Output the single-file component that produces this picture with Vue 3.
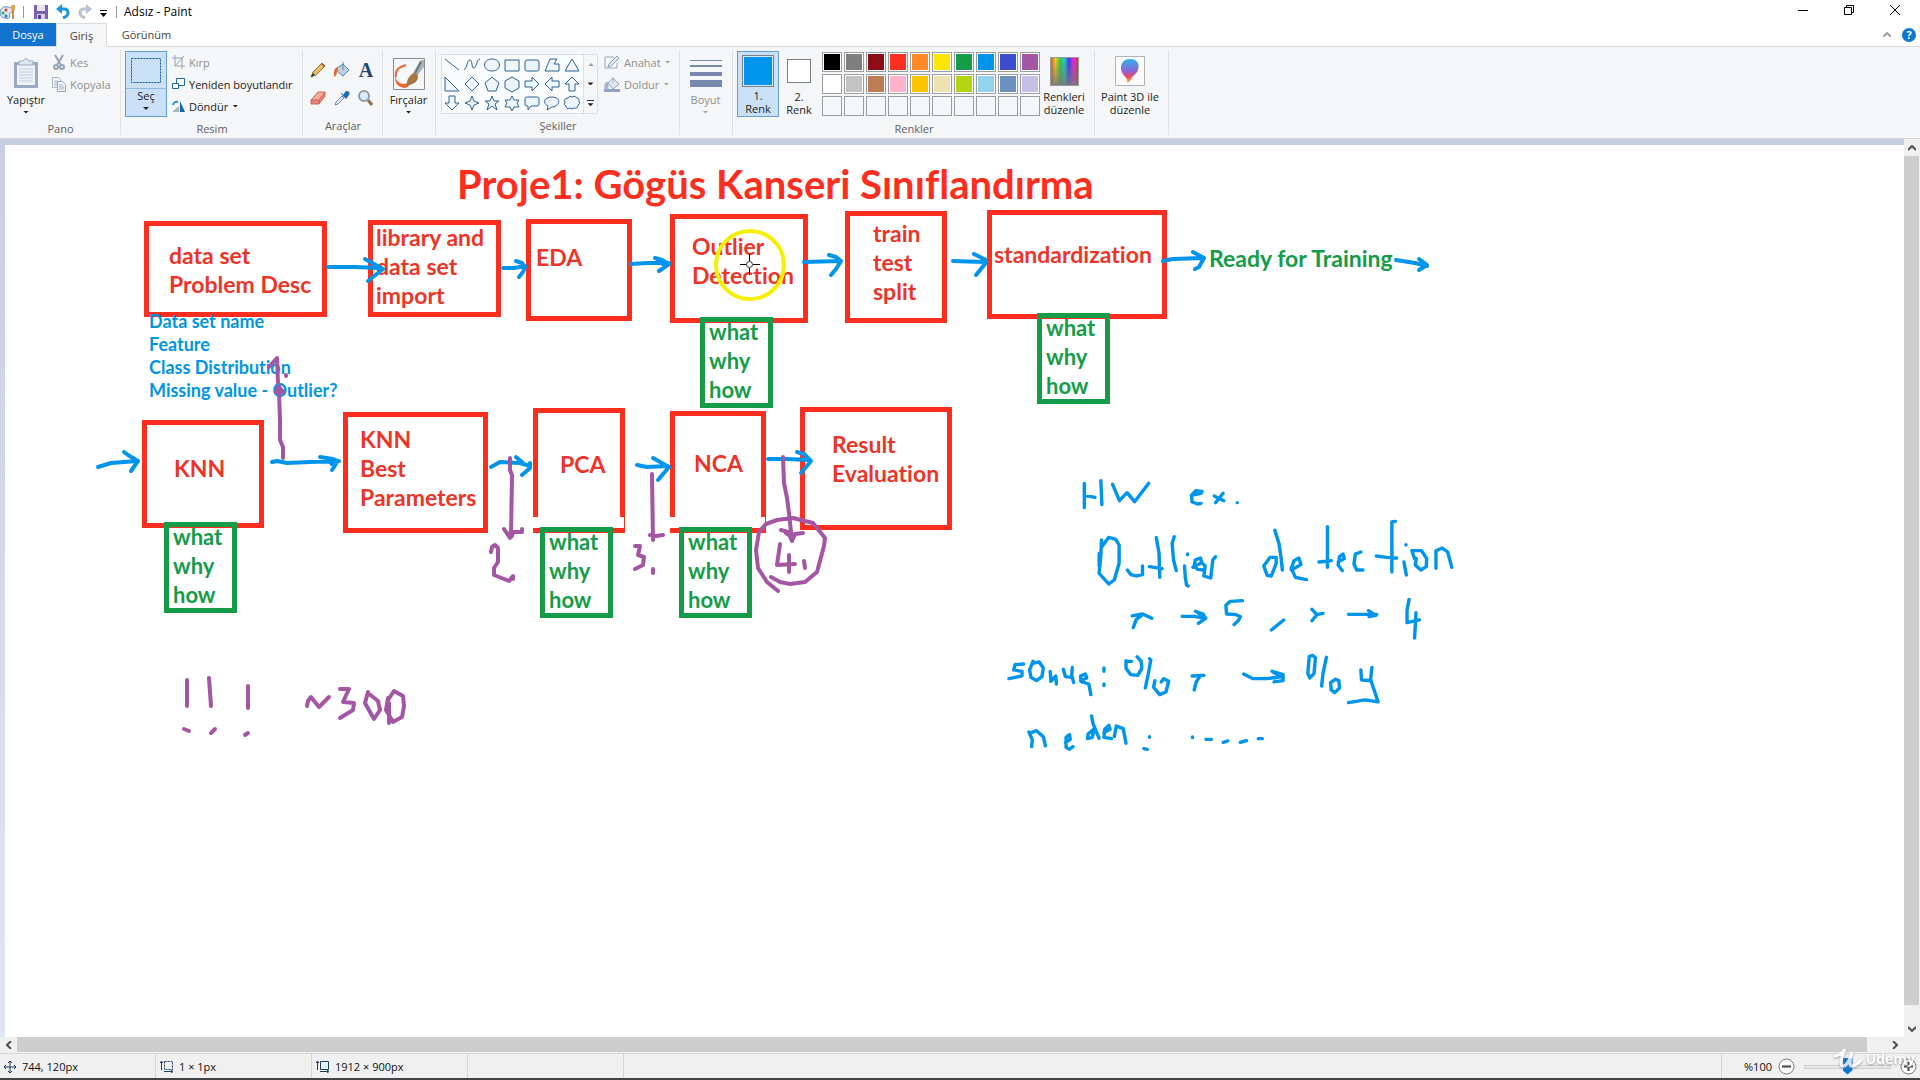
<script setup>
import { ref } from 'vue'

const zoom = ref(50)

const shapes = [
  'M2 3 16 14',
  'M1 14C4 12 4 4 7 4s1 9 4 8 2-8 6-9',
  'M9 3c10 0 10 12 0 12S-1 3 9 3z',
  'M2 4h14v11H2z',
  'M4 4h10q2 0 2 2v7q0 2-2 2H4q-2 0-2-2V6q0-2 2-2z',
  'M7 3h7l-3 5h5v7H2z',
  'M9 3 16 15H2z',
  'M2 2v14h14z',
  'M9 2l7 7-7 7-7-7z',
  'M9 2l7 6-3 8H5L2 8z',
  'M9 2l7 4v7l-7 4-7-4V6z',
  'M2 6h7V2l7 7-7 7v-4H2z',
  'M16 6H9V2L2 9l7 7v-4h7z',
  'M6 16V9H2l7-7 7 7h-4v7z',
  'M6 2v7H2l7 7 7-7h-4V2z',
  'M9 2l2 5 5 2-5 2-2 5-2-5-5-2 5-2z',
  'M9 2l2 5h5l-4 3 2 6-5-4-5 4 2-6-4-3h5z',
  'M9 2l2 4h5l-2 3 2 4h-5l-2 4-2-4H2l2-4-2-3h5z',
  'M4 3h10q2 0 2 2v5q0 2-2 2H8l-3 4v-4H4q-2 0-2-2V5q0-2 2-2z',
  'M9 3c9 0 9 9 0 10l-5 3 1-4C-1 9 1 3 9 3z',
  'M5 4q2-3 4-1 3-2 5 1 3 1 2 3 2 3-1 4 0 4-4 3-2 2-4 0-4 2-4-2-3-1-1-4-2-3 3-4z'
]

const palette = [
  '#000000', '#7f7f7f', '#8c0d15', '#fb2e20', '#ff8a26', '#ffe600', '#149c48', '#0095ec', '#3d4bcc', '#a456a4',
  '#ffffff', '#c3c3c3', '#bd7e56', '#ffb3cb', '#ffc400', '#efe2b0', '#b3d515', '#93d4ec', '#6c90c0', '#c6c0e6',
  '', '', '', '', '', '', '', '', '', ''
]

/* Window position of the sheet's top left corner; all drawing data is in window units. */
const origin = { x: 5, y: 145 }

const boxes = [
  { x: 144, y: 221, w: 183, h: 96 },
  { x: 368, y: 220, w: 133, h: 97 },
  { x: 526, y: 219, w: 106, h: 102 },
  { x: 670, y: 214, w: 138, h: 109 },
  { x: 845, y: 211, w: 102, h: 112 },
  { x: 987, y: 210, w: 180, h: 109 },
  { x: 142, y: 420, w: 122, h: 108 },
  { x: 343, y: 412, w: 145, h: 121 },
  { x: 533, y: 408, w: 92, h: 125, cut: true },
  { x: 670, y: 411, w: 96, h: 122, cut: true },
  { x: 800, y: 407, w: 152, h: 123 }
]

const questions = [
  { x: 700, y: 317 },
  { x: 1037, y: 313 },
  { x: 164, y: 522 },
  { x: 540, y: 527 },
  { x: 679, y: 527 }
]

const notes = [
  { x: 457, y: 158, kind: 'title', lines: ['Proje1: Gögüs Kanseri Sınıflandırma'] },
  { x: 169, y: 241, kind: 'red', lines: ['data set', 'Problem Desc'] },
  { x: 376, y: 223, kind: 'red', lines: ['library and', 'data set', 'import'] },
  { x: 536, y: 243, kind: 'red', lines: ['EDA'] },
  { x: 692, y: 232, kind: 'red', lines: ['Outlier', 'Detection'] },
  { x: 873, y: 219, kind: 'red', lines: ['train', 'test', 'split'] },
  { x: 994, y: 240, kind: 'red', lines: ['standardization'] },
  { x: 1209, y: 244, kind: 'green', lines: ['Ready for Training'] },
  { x: 174, y: 454, kind: 'red', lines: ['KNN'] },
  { x: 360, y: 425, kind: 'red', lines: ['KNN', 'Best', 'Parameters'] },
  { x: 560, y: 450, kind: 'red', lines: ['PCA'] },
  { x: 694, y: 449, kind: 'red', lines: ['NCA'] },
  { x: 832, y: 430, kind: 'red', lines: ['Result', 'Evaluation'] },
  { x: 149, y: 310, kind: 'blue', lines: ['Data set name', 'Feature', 'Class Distribution', 'Missing value - Outlier?'] }
]

const arrows = [
  'M328 267 355 267 380 268M365 259 383 269 368 281',
  'M503 268 514 268 525 266M516 261 522 263 525 267 523 272 519 277',
  'M631 264 648 263 669 263M655 258 662 260 669 264 659 271M658 260 665 266',
  'M804 262 840 261M829 255 836 257 841 261 836 269 831 275',
  'M953 261 984 262M974 254 986 260 985 264 976 275',
  'M1163 261 1173 259 1203 258M1193 252 1204 258 1199 267 1195 269',
  'M1396 260 1415 263 1427 266M1419 259 1427 265 1419 270',
  'M98 467 111 463 137 461M124 452 128 455 138 461 131 471',
  'M272 462 277 461 287 463 310 462 339 461M320 457 333 459 338 461 332 470M326 458 332 464',
  'M491 467 500 462 520 463 530 466M516 457 523 463M530 463 530 468 522 475',
  'M637 465 647 467 668 466M653 458 669 467 658 480',
  'M768 459 787 459 810 460M797 452 804 454 811 461 801 473'
]

const purple = [
  'M283 458 283 447 280 440 280 420 279 392M279 386 276 392 283 392 279 387M269 367 277 358 278 383M286 375 286 376',
  'M510 458 510 470 512 475 511 537M504 529 510 538 514 532 522 532 522 529M507 533 512 536',
  'M491 552 492 547 495 545 498 548 498 562 494 568 494 575 509 581 513 576 513 579',
  'M652 474 653 540M650 535 656 536 663 535',
  'M635 546 640 546 638 555 644 557 643 565 635 569M653 569 653 573',
  'M783 457 784 483 787 498 789 513 792 541M781 530 788 532 792 541 795 534 803 533M786 533 792 537',
  'M778 591 767 582 758 568 756 550 759 532 766 524 777 520 793 518 813 523 825 538 824 546 817 572 805 582 790 584 780 582 771 577',
  'M780 544 777 565 795 564M789 555 789 572M804 561 805 568',
  'M187 680V706M209 678 211 706M248 686V708M184 729 189 731M211 733 215 729M245 735 248 733',
  'M307 706 308 701 311 697 319 707 329 697M340 689 349 689 343 702 354 703 353 710 340 718',
  'M368 692 365 703 374 719 380 710 378 701 368 693M388 700 394 691 403 696 404 706 402 717 393 722 386 710 388 698M389 703V723'
]

const writing = [
  'M361 70V143M361 106 392 112M409 62 412 134M443 73 463 122 485 98 507 125 548 70',
  'M672 106 700 100 703 94 685 92 672 106 674 126 690 132 700 130M738 108 766 122M764 100 742 128M805 128V128',
  'M411 240 409 285 404 340 432 372 448 360 462 310 462 255 452 238 432 232 412 260M404 280V318',
  'M486 330 496 344 512 348 530 344 530 318M570 233 578 280 580 352M550 320 587 326M622 230 616 250 620 300 628 332M661 282V284M652 318 654 350 658 376 663 378',
  'M676 322 702 308 698 294 683 300 680 318 690 328 706 330M742 290 734 300 728 354 708 348 712 318 704 310',
  'M914 211 926 250 932 290 936 330M918 292 900 292 882 318 892 346 904 348 918 310 918 292M962 330 990 314 984 294 970 302 962 325 974 352 1006 359',
  'M1067 200V322M1042 306 1078 302M1098 306 1116 296 1112 282 1102 290 1098 315 1110 332M1164 276 1148 282 1144 312 1152 330 1170 330',
  'M1264 184 1254 186 1254 336M1209 288 1238 292 1268 294M1295 254V255M1289 306 1296 345M1320 296 1312 272 1340 272 1355 296 1354 320 1338 330 1322 315 1325 296M1382 325 1382 272 1400 264 1416 276 1428 322',
  'M500 468 530 462 557 475M530 464 512 478 503 503M645 469 680 469 714 475M684 454 706 462 713 475 692 490M688 456 706 470',
  'M820 422 785 424 772 436 774 462 802 464 814 470 808 482 796 494M904 510 940 480M1022 448 1036 464 1054 460M1036 464 1022 482',
  'M1128 463H1210M1186 452 1208 466 1188 470M1190 455 1200 466M1304 418 1298 450 1298 488 1334 480M1324 458 1320 534',
  'M185 612 160 614 156 630 180 634 180 648 142 656M212 604 202 630 206 652 222 662 238 650 242 624 230 606 212 610M262 634 264 664 278 648 280 672M300 628 306 650 324 652 326 622M326 652 330 668M350 662 368 654 364 642 350 648 352 665 374 672 380 704',
  'M418 624V634M418 672V677M482 602 482 625 496 644 516 646 528 625 526 604 514 590M484 604 498 604M550 596 554 600 546 645 538 684M566 662 562 682 580 704 598 696 606 664 592 656 584 666M674 648 708 646M696 650 686 666 680 690',
  'M824 642 850 656 890 656 936 650M906 634 938 644 938 662 912 666M910 637 930 650 914 654',
  'M1014 590 1010 640 1016 654 1028 640 1032 594 1024 586 1014 590M1064 592 1054 640 1050 678M1090 658 1076 668 1078 690 1088 698 1102 684 1100 662 1090 658M1164 630 1166 660 1192 662 1196 622M1192 658 1214 726 1176 720 1128 728',
  'M200 816 210 840 208 860M202 820 222 812 242 830 248 858M306 848 320 838 318 824 308 832 308 862 318 868 328 860M382 768 386 790 404 835M390 806 372 822 370 836 384 832 390 806M418 818 436 808 432 796 420 808 418 832 440 836M448 830 454 798 474 806 482 850',
  'M550 830V832M534 866 544 868M675 831V833M714 838 730 838M764 847 778 843M814 847 832 842M866 836 878 836'
]

const place = (n) => ({ left: n.x - origin.x + 'px', top: n.y - origin.y + 'px' })
const frame = (n) => ({ ...place(n), width: n.w + 'px', height: n.h + 'px' })
</script>

<template>
  <div class="app">
    <header class="titlebar">
      <svg class="logo" width="16" height="16" viewBox="0 0 16 16">
        <path d="M0 9c0-5 4-7 8-6 5 0 5 5 3 6-2 0-2 1-1 3 0 2-2 3-5 2-3 0-5-2-5-5z" fill="#d9e8f5" stroke="#5f8fb4" />
        <circle cx="3" cy="9" r="1.500" fill="#35a853" /><circle cx="6" cy="6" r="1.500" fill="#e33" /><circle cx="6" cy="12" r="1.500" fill="#27c" />
        <path d="M13 3v12" stroke="#d98733" stroke-width="2" /><path d="M11 1h4v5h-4z" fill="#f1a24a" />
      </svg>
      <i class="bar"></i>
      <button class="plain save" aria-label="Kaydet">
        <svg width="14" height="14" viewBox="0 0 14 14"><path d="M0 0h14v14H0z" fill="#7b60ad" /><path d="M3 0h8v6H3z" fill="#e8e4f2" /><path d="M3 9h8v5H3z" fill="#d4cfe2" /><path d="M4 10h3v4H4z" fill="#57408a" /></svg>
      </button>
      <button class="plain undo" aria-label="Geri al">
        <svg width="14" height="15" viewBox="0 0 14 15"><path d="M3 5h5q4 0 4 4 0 3-5 5" fill="none" stroke="#1c95e0" stroke-width="3" /><path d="M0 5 6 0v10z" fill="#1c95e0" /></svg>
      </button>
      <button class="plain redo" aria-label="Yinele">
        <svg width="14" height="15" viewBox="0 0 14 15"><path d="M11 5H6Q2 5 2 9q0 3 5 5" fill="none" stroke="#b8c3cf" stroke-width="3" /><path d="M14 5 8 0v10z" fill="#b8c3cf" /></svg>
      </button>
      <button class="plain custom" aria-label="Özelleştir">
        <svg width="7" height="7" viewBox="0 0 7 7"><path d="M0 0h7v1H0zM0 3h7L3.500 7z" /></svg>
      </button>
      <i class="bar"></i>
      <h1>Adsız - Paint</h1>
      <div class="controls">
        <button class="plain" aria-label="Simge durumuna küçült"><svg width="10" height="10"><path d="M0 5.500h10" stroke="#000" /></svg></button>
        <button class="plain" aria-label="Önceki boyut"><svg width="10" height="10" viewBox="0 0 10 10"><path d="M.5 2.500h7v7h-7zM2.500 2V.5h7v7H8" fill="none" stroke="#000" /></svg></button>
        <button class="plain" aria-label="Kapat"><svg width="10" height="10"><path d="M0 0 10 10M10 0 0 10" stroke="#000" /></svg></button>
      </div>
    </header>

    <nav class="tabs">
      <button class="tab file">Dosya</button>
      <button class="tab active">Giriş</button>
      <button class="tab view">Görünüm</button>
      <span class="help">
        <button class="plain" aria-label="Şeridi daralt"><svg width="8" height="5"><path d="M0 5 4 1 8 5" fill="none" stroke="#a0a0a0" stroke-width="2" /></svg></button>
        <button class="plain round" aria-label="Yardım">?</button>
      </span>
    </nav>

    <div class="ribbon">
      <section class="group pano">
        <div class="body">
          <button class="big paste">
            <span class="pic">
              <svg width="26" height="31" viewBox="0 0 26 31"><path d="M1 4h24v26H1z" fill="#9aa9c4" /><path d="M4 7h18v20H4z" fill="#eef2f8" /><path d="M6 11h14M6 14h14M6 17h14M6 20h14M6 23h14" stroke="#c3cddd" /><path d="M6 7V3h4q3-5 6 0h4v4z" fill="#dfe5ee" stroke="#9aa9c4" /></svg>
            </span>
            Yapıştır<i class="caret"></i>
          </button>
          <div class="stack">
            <button class="row off"><svg width="14" height="16" viewBox="0 0 14 16"><path d="M3 1 9 11M11 1 5 11" stroke="#98a2b5" stroke-width="2" /><circle cx="4" cy="13" r="2" fill="none" stroke="#98a2b5" stroke-width="2" /><circle cx="10" cy="13" r="2" fill="none" stroke="#98a2b5" stroke-width="2" /></svg>Kes</button>
            <button class="row off"><svg width="14" height="16" viewBox="0 0 14 16"><path d="M.5 1.500h6l2 2v8h-8z" fill="#f3f5f9" stroke="#a9b6cc" /><path d="M2 5h4M2 7h4M2 9h3" stroke="#a9b6cc" /><path d="M5.500 5.500h5l3 3v7h-8z" fill="#f3f5f9" stroke="#94a5c2" /><path d="M7 9h4M7 11h5M7 13h5" stroke="#a9b6cc" /></svg>Kopyala</button>
          </div>
        </div>
        <h2>Pano</h2>
      </section>

      <section class="group resim">
        <div class="body">
          <button class="big chosen select">
            <span class="pic"><svg width="30" height="25" viewBox="0 0 30 25"><path d="M.5.5h29v24H.5z" fill="none" stroke="#17569a" stroke-dasharray="2 1" /></svg></span>
            <span class="half">Seç<i class="caret"></i></span>
          </button>
          <div class="stack">
            <button class="row off"><svg width="13" height="14" viewBox="0 0 13 14"><path d="M3 0v11h10M0 3h10v11M3 11 12 1" fill="none" stroke="#98a2b5" /></svg>Kırp</button>
            <button class="row"><svg width="13" height="14" viewBox="0 0 13 14"><path d="M4.500 1.500h8v7h-8z" fill="#fff" stroke="#1d66ab" /><path d="M.5 6.500h6v5h-6z" fill="#fff" stroke="#1d66ab" /></svg>Yeniden boyutlandır</button>
            <button class="row"><svg width="13" height="14" viewBox="0 0 13 14"><path d="M8 2v11h5z" fill="#1465b0" /><path d="M7 7v6H0z" fill="#a8b4c2" /><path d="M1 6q1-4 5-3" fill="none" stroke="#1e90dc" stroke-width="2" /></svg>Döndür<i class="caret"></i></button>
          </div>
        </div>
        <h2>Resim</h2>
      </section>

      <section class="group araclar">
        <div class="body tools">
          <button class="plain" aria-label="Kalem"><svg width="16" height="16" viewBox="0 0 16 16"><path d="M1 15 3 10 12 1l3 3-9 9z" fill="#e9c063" stroke="#8a7340" /><path d="M11 2l3 3 1-1-3-3z" fill="#c4473b" /><path d="M1 15l2-4 2 2z" fill="#333" /></svg></button>
          <button class="plain" aria-label="Boya dök"><svg width="16" height="16" viewBox="0 0 16 16"><path d="M3 6 9 2l6 6-6 6-5-4z" fill="#bcd3e6" stroke="#5d87ab" /><path d="M9 8V0" stroke="#5d87ab" /><path d="M4 5Q0 6 0 10v5q3-1 3-6z" fill="#e8682c" /></svg></button>
          <button class="plain letter" aria-label="Metin">A</button>
          <button class="plain" aria-label="Silgi"><svg width="16" height="14" viewBox="0 0 16 14"><path d="M1 9 8 1h7l-6 9z" fill="#f5aaa0" stroke="#c9685d" /><path d="M1 9h8v4H1zM9 13l6-8V1L9 9z" fill="#e88478" stroke="#c9685d" /></svg></button>
          <button class="plain" aria-label="Renk seçici"><svg width="16" height="16" viewBox="0 0 16 16"><path d="M1 15 2 12 8 6l2 2-6 6z" fill="#dce8f0" stroke="#6d8ba2" /><path d="M7 4 12 9 15 5Q17 1 12 1L9 5 8 3z" fill="#2268b4" /></svg></button>
          <button class="plain" aria-label="Büyüteç"><svg width="16" height="16" viewBox="0 0 16 16"><path d="M10 10 14 15" stroke="#8f7150" stroke-width="3" /><circle cx="6" cy="6" r="5" fill="#d7ebf7" stroke="#8d9dab" stroke-width="2" /></svg></button>
        </div>
        <h2>Araçlar</h2>
      </section>

      <section class="group brush">
        <div class="body">
          <button class="big">
            <span class="pic">
              <svg width="32" height="32" viewBox="0 0 32 32"><path d="M.5.5h31v31H.5z" fill="#f6f7f8" stroke="#8b8f94" /><path d="M13 7Q1 10 3 19" fill="none" stroke="#ec6330" stroke-width="2" /><path d="M2 17q1 8 8 9 4 0 6-2 1 5-4 6Q1 29 2 17z" fill="#ec6330" /><path d="M20 15 28 2h3v7l-7 9z" fill="#a9b5c3" /><path d="M27 3l2 1-6 12-2-1z" fill="#6d7986" /><path d="M14 28q-1-7 5-12 4-3 6 2 1 7-11 10z" fill="#a87644" /></svg>
            </span>
            Fırçalar<i class="caret"></i>
          </button>
        </div>
      </section>

      <section class="group sekiller">
        <div class="body">
          <div class="gallery">
            <div class="grid">
              <button v-for="(d, i) in shapes" :key="i" class="plain" :aria-label="'Şekil ' + (i + 1)">
                <svg width="18" height="18" viewBox="0 0 18 18"><path :d="d" fill="#eef5fb" stroke="#2c6394" /></svg>
              </button>
            </div>
            <div class="scroller">
              <button class="plain" aria-label="Yukarı"><i class="caret up faint"></i></button>
              <button class="plain" aria-label="Aşağı"><i class="caret"></i></button>
              <button class="plain more" aria-label="Tümü"><i class="caret"></i></button>
            </div>
          </div>
          <div class="stack">
            <button class="row off"><svg width="16" height="15" viewBox="0 0 16 15"><path d="M1 2h9M1 2v11h12V8" fill="none" stroke="#98a8c0" /><path d="M4 12 5 9 13 1l2 2-8 8z" fill="#e4e9f1" stroke="#8f9fb9" /></svg>Anahat<i class="caret faint"></i></button>
            <button class="row off"><svg width="16" height="15" viewBox="0 0 16 15"><path d="M0 12h16v3H0z" fill="#8fa1bf" /><path d="M4 6 9 1l6 6-6 5z" fill="#e4e9f1" stroke="#8f9fb9" /><path d="M9 6V0M3 5Q0 6 1 12h3V6z" fill="#a6b4ca" stroke="#a6b4ca" /></svg>Doldur<i class="caret faint"></i></button>
          </div>
        </div>
        <h2>Şekiller</h2>
      </section>

      <section class="group boyut">
        <div class="body">
          <button class="big off">
            <span class="pic"><svg width="32" height="28"><path d="M0 0h32v1H0zM0 5h32v2H0zM0 12h32v4H0zM0 20h32v7H0z" fill="#7688ab" /></svg></span>
            Boyut<i class="caret faint"></i>
          </button>
        </div>
      </section>

      <section class="group renkler">
        <div class="body">
          <button class="big chosen"><span class="pic"><i class="swatch first"></i></span>1.<br />Renk</button>
          <button class="big second"><span class="pic"><i class="swatch"></i></span>2.<br />Renk</button>
          <div class="palette">
            <button v-for="(c, i) in palette" :key="i" class="cell" :class="{ empty: !c }" :style="{ backgroundColor: c || 'transparent' }" :aria-label="'Renk ' + (i + 1)"></button>
          </div>
          <button class="big edit"><span class="pic"><i class="rainbow"></i></span>Renkleri<br />düzenle</button>
        </div>
        <h2>Renkler</h2>
      </section>

      <section class="group paint3d">
        <div class="body">
          <button class="big">
            <span class="pic">
              <svg width="30" height="30" viewBox="0 0 30 30">
                <defs>
                  <linearGradient id="drop" x1="0" y1="0" x2="0" y2="1"><stop offset="0" stop-color="#2cb4f0" /><stop offset=".5" stop-color="#8a64d8" /><stop offset=".75" stop-color="#ee4468" /><stop offset="1" stop-color="#ffc21c" /></linearGradient>
                </defs>
                <path d="M.5.5h29v29H.5z" fill="#fbfbfb" stroke="#b0b3b6" />
                <path d="M15 3c12 0 10 13 3 17-2 2-2 6-6 7 2-6-6-7-6-15 0-6 4-9 9-9z" fill="url(#drop)" />
              </svg>
            </span>
            Paint 3D ile<br />düzenle
          </button>
        </div>
      </section>
    </div>

    <div class="work">
      <main class="sheet">
        <div v-for="(b, i) in boxes" :key="'b' + i" class="box" :class="{ cut: b.cut }" :style="frame(b)"></div>
        <div v-for="(q, i) in questions" :key="'q' + i" class="ask" :style="place(q)">what<br />why<br />how</div>
        <p v-for="(n, i) in notes" :key="'n' + i" class="note" :class="n.kind" :style="place(n)">
          <span v-for="l in n.lines" :key="l">{{ l }}</span>
        </p>
        <svg class="ink">
          <g transform="translate(-5 -145)">
            <path v-for="(d, i) in arrows" :key="'a' + i" :d="d" class="pen blue-pen" />
            <path v-for="(d, i) in purple" :key="'p' + i" :d="d" class="pen purple-pen" />
            <g transform="translate(960 460) scale(.3444 .3333)">
              <path v-for="(d, i) in writing" :key="'w' + i" :d="d" class="pen blue-pen script" />
            </g>
            <circle cx="750" cy="265" r="34" fill="none" stroke="#f6f000" stroke-width="4" />
            <path d="M740 264.500h7M753 264.500h7M749.500 254v7M749.500 268v7" stroke="#000" />
            <circle cx="749.500" cy="264.500" r="3" fill="#fff" stroke="#333" />
          </g>
        </svg>
      </main>
      <div class="vscroll">
        <button class="plain" aria-label="Yukarı kaydır"><svg width="8" height="6"><path d="M0 5 4 1 8 5" fill="none" stroke="#505050" stroke-width="2" /></svg></button>
        <i class="thumb"></i>
        <button class="plain down" aria-label="Aşağı kaydır"><svg width="8" height="6"><path d="M0 1 4 5 8 1" fill="none" stroke="#505050" stroke-width="2" /></svg></button>
      </div>
    </div>
    <div class="hscroll">
      <button class="plain" aria-label="Sola kaydır"><svg width="6" height="8"><path d="M5 0 1 4 5 8" fill="none" stroke="#505050" stroke-width="2" /></svg></button>
      <i class="thumb"></i>
      <button class="plain right" aria-label="Sağa kaydır"><svg width="6" height="8"><path d="M1 0 5 4 1 8" fill="none" stroke="#505050" stroke-width="2" /></svg></button>
    </div>

    <footer class="status">
      <span class="info"><svg width="12" height="12" viewBox="0 0 12 12"><path d="M6 0v12M0 6h12M4 2l2-2 2 2M4 10l2 2 2-2M2 4 0 6l2 2M10 4l2 2-2 2" fill="none" stroke="#1e3c5c" /></svg>744, 120px</span>
      <span class="info"><svg width="13" height="12" viewBox="0 0 13 12"><path d="M4.500.5h8v8h-8z" fill="none" stroke="#1e3c5c" stroke-dasharray="2 1" /><path d="M1.500 9V1M0 2l1.500-2L3 2M4 10.500h8M11 9l2 1.500-2 1.500" fill="none" stroke="#1e3c5c" /></svg>1 × 1px</span>
      <span class="info"><svg width="13" height="12" viewBox="0 0 13 12"><path d="M4.500.5h8v8h-8z" fill="#e7f2fb" stroke="#1e3c5c" /><path d="M1.500 9V1M0 2l1.500-2L3 2M4 10.500h8M11 9l2 1.500-2 1.500" fill="none" stroke="#1e3c5c" /></svg>1912 × 900px</span>
      <span class="info"></span>
      <div class="zoom">
        <label for="zoom">%100</label>
        <button class="plain" aria-label="Uzaklaştır"><svg width="17" height="17"><circle cx="8.500" cy="8.500" r="7.500" fill="#fafafa" stroke="#777" /><path d="M4 8.500h9" stroke="#444" stroke-width="2" /></svg></button>
        <input id="zoom" v-model="zoom" type="range" min="0" max="100" />
        <button class="plain" aria-label="Yakınlaştır"><svg width="17" height="17"><circle cx="8.500" cy="8.500" r="7.500" fill="#fafafa" stroke="#777" /><path d="M4 8.500h9M8.500 4v9" stroke="#444" stroke-width="2" /></svg></button>
      </div>
      <div class="mark">
        <svg width="28" height="22" viewBox="0 0 28 22"><path d="M1 8Q7 7 11 1 4 18 9 18q5 0 9-14-4 14 0 14 4 0 9-6" fill="none" stroke="#fff" stroke-width="3" stroke-linecap="round" /></svg>
        <span>Udemy</span>
      </div>
    </footer>
    <div class="edge"></div>
  </div>
</template>

<style>
body { margin: 0; overflow: hidden; }
</style>

<style scoped>
* { box-sizing: border-box; }
.app { display: flex; flex-direction: column; height: 100vh; background: #fff; color: #222; font: 11px/13px "Open Sans", "Noto Sans", sans-serif; }
button { margin: 0; border: 0; padding: 0; background: none; color: inherit; font: inherit; }
.plain { display: flex; align-items: center; justify-content: center; }
svg { display: block; flex: none; }

.titlebar { display: flex; align-items: center; height: 23px; flex: none; }
.titlebar .bar { width: 1px; height: 12px; background: #999; }
.logo { margin-right: 7px; }
.save { margin-left: 10px; }
.undo { margin-left: 8px; }
.redo { margin-left: 8px; }
.custom { margin: 3px 9px 0 8px; }
.titlebar h1 { margin: 0 0 0 7px; font-size: 12px; font-weight: 400; line-height: 23px; color: #000; }
.controls { display: flex; align-self: flex-start; margin: 0 2px 0 auto; }
.controls button { width: 46px; height: 20px; }

.tabs { display: flex; height: 24px; flex: none; border-bottom: 1px solid #d9dadc; line-height: 22px; color: #444; }
.tab { height: 24px; }
.tab.file { width: 56px; height: 23px; background: #1273cc; color: #fff; }
.tab.active { width: 51px; border: 1px solid #dadbdc; border-bottom: 0; background: #f5f6f7; }
.tab.view { width: 79px; }
.help { display: flex; align-items: center; gap: 11px; margin-left: auto; padding-right: 4px; }
.round { width: 14px; height: 14px; border-radius: 50%; background: #0b74d4; color: #fff; font-weight: 700; }

.ribbon { display: flex; height: 92px; flex: none; border-bottom: 1px solid #d4d7db; background: #f5f6f7; }
.group { position: relative; display: flex; flex-direction: column; flex: none; padding-top: 4px; }
.group::after { content: ""; position: absolute; top: 3px; right: 0; bottom: 3px; width: 1px; background: #e0e2e4; }
.body { display: flex; height: 66px; }
.group h2 { margin: 0; font-size: 11px; font-weight: 400; line-height: 24px; text-align: center; color: #5c6066; }
.pano { width: 121px; }
.resim { width: 182px; }
.araclar { width: 80px; }
.brush { width: 53px; }
.sekiller { width: 244px; }
.boyut { width: 53px; }
.renkler { width: 362px; }
.paint3d { width: 74px; }

.big { display: block; width: 42px; height: 66px; flex: none; text-align: center; white-space: nowrap; }
.pic { display: flex; align-items: center; justify-content: center; height: 38px; }
.chosen { border: 1px solid #649fd8; background: #c9e0f7; }
.chosen .pic { height: 36px; }
.caret { display: block; width: 6px; height: 3px; margin: 5px auto 0; background: #222; clip-path: polygon(0 0, 100% 0, 50% 100%); }
.caret.up { transform: rotate(180deg); }
.faint { background: #a4a4a4; }
.off { color: #8d8f92; }
.stack { display: flex; flex-direction: column; }
.row { display: flex; align-items: center; gap: 4px; height: 22px; white-space: nowrap; }
.row .caret { margin: 0; }
.paste { width: 52px; }
.select { margin: 0 5px 0 4px; }
.half { display: block; height: 28px; border-top: 1px solid #8fbbe6; }

.tools { display: grid; grid-template-columns: 24px 24px 24px; grid-template-rows: 28px 28px; padding: 5px 0 0 3px; }
.letter { font: 700 20px/20px "Liberation Serif", serif; color: #24466e; }
.brush .big, .boyut .big { width: 51px; }

.sekiller .body { gap: 6px; padding-left: 5px; }
.gallery { display: flex; width: 157px; height: 60px; margin-top: 3px; border: 1px solid #dcdfe3; background: #fbfcfd; }
.grid { display: grid; grid-template-columns: repeat(7, 20px); grid-template-rows: repeat(3, 19px); width: 141px; }
.scroller { display: flex; flex: 1; flex-direction: column; border-left: 1px solid #dcdfe3; background: #f5f6f7; }
.scroller button { flex: 1; }
.scroller .caret { margin: 0; }
.more { flex-direction: column; gap: 2px; }
.more::before { content: ""; width: 7px; height: 1px; background: #333; }

.renkler .body { padding-left: 4px; }
.swatch { display: block; width: 24px; height: 24px; border: 1px solid #7c7f84; background: #fff; }
.swatch.first { width: 32px; height: 32px; background: #0095ec; box-shadow: inset 0 0 0 1px #d8e8f5; }
.second { width: 40px; }
.palette { display: grid; grid-template-columns: repeat(10, 20px); grid-template-rows: repeat(3, 20px); gap: 2px; margin: 1px 0 0 3px; }
.cell { border: 1px solid #9a9da1; box-shadow: inset 0 0 0 1px #fff; }
.cell.empty { box-shadow: none; }
.edit { width: 48px; }
.rainbow { display: block; width: 29px; height: 29px; border: 1px solid #999; background: linear-gradient(transparent, #777d), linear-gradient(90deg, #e52, #fc2, #3c3, #2cc, #33f, #e2d, #e23); }
.paint3d .big { width: 70px; }

.work { display: flex; flex: 1; min-height: 0; background: linear-gradient(#c6d0e2, #dde6f5); }
.sheet { position: relative; flex: 1; margin: 6px 0 0 5px; overflow: hidden; background: #fff; font-variant-ligatures: none; }
.box, .ask, .note { position: absolute; }
.box { border: 5px solid #fb2e20; }
.box.cut::after { content: ""; position: absolute; right: -4px; bottom: 0; left: -5px; height: 11px; background: #fff; }
.ask { width: 73px; height: 91px; padding-left: 9px; box-shadow: inset 0 0 0 5px #149c48; font: 700 22px/29px Lato, sans-serif; font-variant-ligatures: none; color: #149c48; }
.note { margin: 0; font: 700 23px/29px Lato, sans-serif; font-variant-ligatures: none; white-space: nowrap; }
.note span { display: block; }
.red { color: #ec3428; }
.green { color: #149c48; }
.title { font-size: 40px; line-height: 52px; color: #fb2e20; }
.blue { font-size: 18px; line-height: 23px; color: #0095e4; }
.ink { position: absolute; inset: 0; width: 100%; height: 100%; }
.pen { fill: none; stroke-width: 4; stroke-linecap: round; stroke-linejoin: round; }
.blue-pen { stroke: #0095ec; }
.purple-pen { stroke: #a456a4; }
.script { stroke-width: 10; }

.vscroll { display: flex; flex-direction: column; width: 16px; background: #f0f0f0; }
.vscroll button { height: 17px; }
.vscroll .thumb { flex: 1; margin-right: 1px; background: #cdcdcd; }
.vscroll .down { margin-top: 15px; }
.hscroll { display: flex; height: 16px; flex: none; background: #f0f0f0; }
.hscroll button { width: 17px; }
.hscroll .thumb { flex: 1; margin-bottom: 1px; background: #cdcdcd; }
.hscroll .right { margin: 0 17px 0 19px; }

.status { position: relative; display: flex; height: 25px; flex: none; border-top: 1px solid #d7d7d7; background: #f0f0f0; font-size: 11px; line-height: 24px; color: #111; }
.info { display: flex; align-items: center; gap: 6px; width: 156px; padding: 1px 0 0 4px; border-right: 1px solid #d7d7d7; white-space: nowrap; }
.zoom { display: flex; align-items: center; width: 199px; margin-left: auto; padding: 1px 0 0 22px; border-left: 1px solid #d7d7d7; }
.zoom label { width: 34px; }
.zoom input { width: 87px; height: 18px; margin: 0 9px; appearance: none; background: none; }
.zoom input::-webkit-slider-runnable-track { height: 4px; border: 1px solid #d0d0d0; background: #e7e7e7; }
.zoom input::-webkit-slider-thumb { width: 10px; height: 17px; margin-top: -8px; appearance: none; background: #0a74d6; clip-path: polygon(0 0, 100% 0, 100% 75%, 50% 100%, 0 75%); }
.mark { position: absolute; right: 5px; bottom: 8px; display: flex; align-items: center; gap: 4px; font: 700 14px/16px "Open Sans", sans-serif; color: #fff; opacity: .8; filter: drop-shadow(0 1px 1px #888); pointer-events: none; }
.edge { height: 2px; flex: none; background: #414347; }
</style>
